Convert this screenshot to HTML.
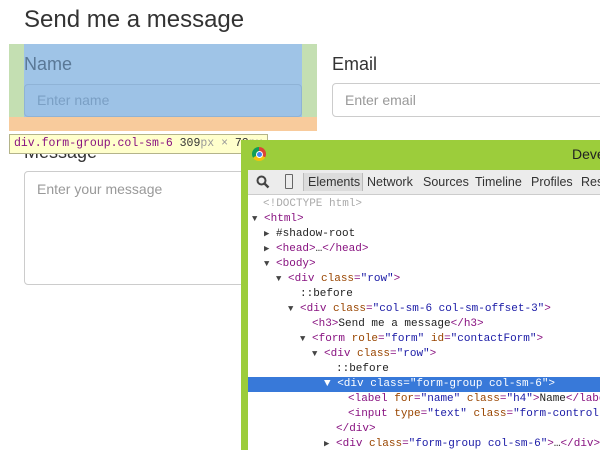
<!DOCTYPE html>
<html style="overflow:hidden;width:600px;height:450px"><head><style>
body{margin:0;width:600px;height:450px;position:relative;overflow:hidden;background:#fff;font-family:"Liberation Sans",sans-serif;color:#333}
.a{position:absolute}
.inp{position:absolute;border:1px solid #ccc;border-radius:4px;box-sizing:border-box;color:#999;font-size:14px;padding-left:12px}
.mono{font-family:"Liberation Mono","DejaVu Sans Mono",monospace;font-size:11px;white-space:pre}
.ln{position:absolute;left:0;height:15px;line-height:15px}
.tg{color:#881280}.at{color:#994500}.av{color:#1a1aa6}
.tri{color:#444;font-size:9px}
.tb{position:absolute;top:175px;font-size:12.5px;color:#333;white-space:pre}
</style></head><body>
<div class="a" style="left:24px;top:6px;font-size:24px;color:#333">Send me a message</div>
<div class="a" style="left:9px;top:44px;width:308px;height:73px;background:#c4dfb2"></div>
<div class="a" style="left:9px;top:117px;width:308px;height:14px;background:#f8cb9c"></div>
<div class="a" style="left:24px;top:44px;width:278px;height:73px;background:#9fc4e7"></div>
<div class="a" style="left:24px;top:54px;font-size:18px;color:#5a7896">Name</div>
<div class="inp" style="left:24px;top:84px;width:278px;height:33px;border-color:#8fb3d6;line-height:31px;color:#7a9fc4;background:#9dc2e6">Enter name</div>
<div class="a" style="left:332px;top:54px;font-size:18px">Email</div>
<div class="inp" style="left:332px;top:83px;width:290px;height:34px;line-height:32px">Enter email</div>
<div class="a" style="left:24px;top:142px;font-size:18px">Message</div>
<div class="inp" style="left:24px;top:171px;width:240px;height:114px;padding-top:9px">Enter your message</div>
<div class="a mono" style="left:9px;top:134px;height:18px;line-height:18px;padding:0 4px;background:#ffffcc;border:1px solid #b4b48a;color:#881280;font-size:11.5px">div.form-group.col-sm-6 <span style="color:#333">309</span><span style="color:#999">px × </span><span style="color:#333">73</span><span style="color:#999">px</span></div>
<div class="a" style="left:241px;top:140px;width:359px;height:310px;background:#9ccd3b;overflow:hidden">
</div>
<div class="a" style="left:252px;top:147px;width:14px;height:14px;border-radius:50%;background:conic-gradient(#db4437 0 33%,#f4c20d 0 66%,#0f9d58 0)"></div>
<div class="a" style="left:256px;top:151px;width:5px;height:5px;border-radius:50%;background:#4285f4;border:1px solid #fff"></div>
<div class="a" style="left:572px;top:146px;font-size:14px;color:#222">Deve</div>
<div class="a" style="left:248px;top:170px;width:352px;height:24px;background:#ececec;border-bottom:1px solid #ccc"></div>
<svg class="a" style="left:256px;top:175px" width="14" height="14" viewBox="0 0 14 14"><circle cx="5.5" cy="5.5" r="4" fill="none" stroke="#444" stroke-width="2"/><line x1="8.5" y1="8.5" x2="12.5" y2="12.5" stroke="#444" stroke-width="2.4"/></svg>
<div class="a" style="left:285px;top:174px;width:6px;height:13px;border:1px solid #666;border-radius:1px"></div>
<div class="a" style="left:303px;top:173px;height:18px;border-left:1px solid #bbb;border-right:1px solid #bbb;background:#dcdcdc;width:58px"></div>
<div class="tb" style="left:308px">Elements</div>
<div class="tb" style="left:367px">Network</div>
<div class="tb" style="left:423px">Sources</div>
<div class="tb" style="left:475px">Timeline</div>
<div class="tb" style="left:531px">Profiles</div>
<div class="tb" style="left:581px">Res</div>
<div class="a" style="left:248px;top:195px;width:352px;height:255px;background:#fff"></div>
<div class="a mono" style="left:248px;top:197px;width:352px;height:253px;color:#222;overflow:hidden">
<div class="ln" style="top:0;left:15px;color:#aaa">&lt;!DOCTYPE html&gt;</div>
<div class="ln" style="top:15px;left:4px"><span class="tri">▼</span> <span class="tg">&lt;html&gt;</span></div>
<div class="ln" style="top:30px;left:16px"><span class="tri">▶</span> #shadow-root</div>
<div class="ln" style="top:45px;left:16px"><span class="tri">▶</span> <span class="tg">&lt;head&gt;</span>…<span class="tg">&lt;/head&gt;</span></div>
<div class="ln" style="top:60px;left:16px"><span class="tri">▼</span> <span class="tg">&lt;body&gt;</span></div>
<div class="ln" style="top:75px;left:28px"><span class="tri">▼</span> <span class="tg">&lt;div <span class="at">class</span>=<span class="av">"row"</span>&gt;</span></div>
<div class="ln" style="top:90px;left:52px">::before</div>
<div class="ln" style="top:105px;left:40px"><span class="tri">▼</span> <span class="tg">&lt;div <span class="at">class</span>=<span class="av">"col-sm-6 col-sm-offset-3"</span>&gt;</span></div>
<div class="ln" style="top:120px;left:64px"><span class="tg">&lt;h3&gt;</span>Send me a message<span class="tg">&lt;/h3&gt;</span></div>
<div class="ln" style="top:135px;left:52px"><span class="tri">▼</span> <span class="tg">&lt;form <span class="at">role</span>=<span class="av">"form"</span> <span class="at">id</span>=<span class="av">"contactForm"</span>&gt;</span></div>
<div class="ln" style="top:150px;left:64px"><span class="tri">▼</span> <span class="tg">&lt;div <span class="at">class</span>=<span class="av">"row"</span>&gt;</span></div>
<div class="ln" style="top:165px;left:88px">::before</div>
<div class="ln" style="top:180px;left:0;width:352px;background:#3879d9;color:#fff;padding-left:76px;box-sizing:border-box">▼ &lt;div class="form-group col-sm-6"&gt;</div>
<div class="ln" style="top:195px;left:100px"><span class="tg">&lt;label <span class="at">for</span>=<span class="av">"name"</span> <span class="at">class</span>=<span class="av">"h4"</span>&gt;</span>Name<span class="tg">&lt;/label&gt;</span></div>
<div class="ln" style="top:210px;left:100px"><span class="tg">&lt;input <span class="at">type</span>=<span class="av">"text"</span> <span class="at">class</span>=<span class="av">"form-control"</span></span></div>
<div class="ln" style="top:225px;left:88px"><span class="tg">&lt;/div&gt;</span></div>
<div class="ln" style="top:240px;left:76px"><span class="tri">▶</span> <span class="tg">&lt;div <span class="at">class</span>=<span class="av">"form-group col-sm-6"</span>&gt;</span>…<span class="tg">&lt;/div&gt;</span></div>
</div>
</body></html>
